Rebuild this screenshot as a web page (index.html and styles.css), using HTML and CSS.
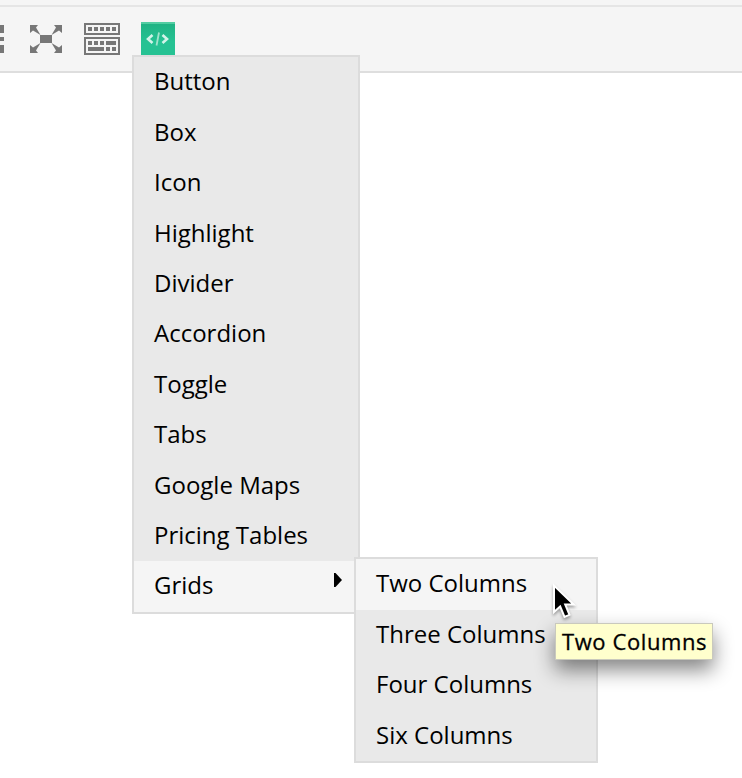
FILE: index.html
```
<!DOCTYPE html>
<html lang="en">
<head>
<meta charset="utf-8">
<title>Editor</title>
<link rel="stylesheet" href="styles.css">
</head>
<body>
<header class="toolbar">
  <svg class="icon icon-more" width="4" height="32" viewBox="0 0 4 32" shape-rendering="crispEdges"><path d="M0 2h4v8H0zM0 14h4v4H0zM0 22h4v8H0z"/></svg>
  <svg class="icon icon-full" width="32" height="32" viewBox="0 0 32 32"><path d="M10 12h12v8H10zM0 2h8L6 4.500 10.500 12 3 7.500 0 10zM32 2h-8l2 2.500L21.500 12 29 7.500 32 10zM0 30h8l-2-2.500L10.500 20 3 24.500 0 22zM32 30h-8l2-2.500L21.500 20l7.500 4.500 3-2.500z"/></svg>
  <svg class="icon icon-keys" width="36" height="32" viewBox="0 0 36 32" shape-rendering="crispEdges"><path fill-rule="evenodd" d="M0 0h36v12H0zM2 2v8h32V2zM0 14h36v18H0zM2 16v14h32V16z"/><path d="M4 4h4v4H4zM10 4h4v4h-4zM16 4h4v4h-4zM22 4h4v4h-4zM28 4h4v4h-4zM4 18h4v4H4zM10 18h4v4h-4zM16 18h4v4h-4zM22 18h10v4H22zM4 24h16v4H4zM22 24h4v4h-4zM28 24h4v4h-4z"/></svg>
  <div class="code-button">
    <svg width="34" height="33" viewBox="0 0 34 33"><path class="code-glyph" d="M11.500 13 7 17l4.500 4M21.500 13l4.500 4-4.500 4"/><path class="code-slash" d="M18 10.500l-2.500 13"/></svg>
    <ul class="menu">
      <li>Button</li>
      <li>Box</li>
      <li>Icon</li>
      <li>Highlight</li>
      <li>Divider</li>
      <li>Accordion</li>
      <li>Toggle</li>
      <li>Tabs</li>
      <li>Google Maps</li>
      <li>Pricing Tables</li>
      <li class="active parent">Grids
        <svg class="arrow" width="8" height="14" viewBox="0 0 8 14"><path d="M0 0h1.500L8 7l-6.500 7H0z"/></svg>
        <ul class="menu submenu">
          <li class="active">Two Columns</li>
          <li>Three Columns</li>
          <li>Four Columns</li>
          <li>Six Columns</li>
        </ul>
      </li>
    </ul>
  </div>
</header>
<div class="tooltip">Two Columns</div>
<svg class="cursor" width="28" height="40" viewBox="0 0 28 40"><path d="M4 3.500v26.500l6.200-5.500 4.300 10.500 5-2.200-4.300-10.300h8.500z"/></svg>
</body>
</html>
```
FILE: styles.css
```
body {
  margin: 0;
  height: 778px;
  overflow: hidden;
  background: #fff;
  color: #000;
  font: 24px/49.6px "Open Sans", sans-serif;
}
body::before {
  content: "";
  display: block;
  height: 5px;
  background: #f5f5f5;
}
.toolbar {
  display: flex;
  align-items: flex-start;
  box-sizing: border-box;
  height: 68px;
  padding-top: 15px;
  border-top: 2px solid #e5e5e5;
  border-bottom: 2px solid #dedede;
  background: #f5f5f5;
}
.icon {
  margin-top: 1px;
  fill: #777;
}
.icon-full { margin-left: 26px; }
.icon-keys { margin-left: 22px; }
.code-button {
  position: relative;
  width: 34px;
  height: 33px;
  margin-left: 21px;
  background: linear-gradient(#52cda2 0, #52cda2 2px, #20b384 2px, #26c293 20px);
}
.code-button > svg { display: block; }
.code-glyph {
  fill: none;
  stroke: #d3f3e9;
  stroke-width: 2.6;
}
.code-slash {
  stroke: #a0e2cb;
  stroke-width: 1.8;
}
.menu {
  position: absolute;
  top: 33px;
  left: -9px;
  box-sizing: border-box;
  width: 228px;
  margin: 0;
  padding: 0 0 .5px;
  border: 2px solid #dcdcdc;
  background: #e9e9e9;
  list-style: none;
}
.menu li {
  height: 50.4px;
  padding-left: 20px;
  white-space: nowrap;
}
.menu > li:first-child { margin-top: -.6px; }
.menu li.parent {
  height: 51px;
  margin-top: .6px;
  line-height: 48px;
}
.menu .active { background: #f5f5f5; }
.parent { position: relative; }
.arrow {
  position: absolute;
  top: 12px;
  right: 16px;
}
.menu.submenu {
  top: -4px;
  left: 220px;
  width: 244px;
  padding: 0;
}
.submenu li { height: 50.5px; }
.submenu > li.active {
  height: 50.6px;
  margin-top: 0;
}
.submenu > li:first-child { margin-top: 0; }
.tooltip {
  position: absolute;
  top: 623px;
  left: 555px;
  box-sizing: border-box;
  width: 158px;
  height: 37px;
  padding-left: 6px;
  border: 1px solid #c9c9bd;
  background: #ffffcd;
  background-clip: padding-box;
  box-shadow: 0 10px 20px rgba(0, 0, 0, .48);
  font-size: 22px;
  line-height: 34px;
  letter-spacing: .6px;
  white-space: nowrap;
  -webkit-text-stroke: .3px #000;
}
.cursor {
  position: absolute;
  top: 582px;
  left: 550px;
  stroke: #fff;
  stroke-width: 2;
  filter: drop-shadow(0 2px 1.5px rgba(0, 0, 0, .35));
}
```
